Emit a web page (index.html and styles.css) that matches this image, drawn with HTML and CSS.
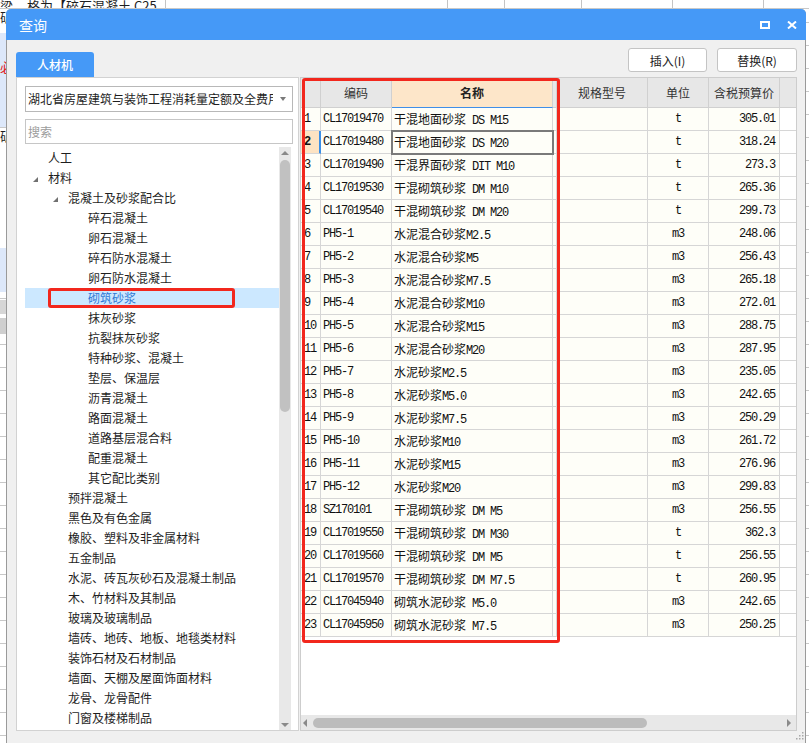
FILE: index.html
```html
<!DOCTYPE html>
<html lang="zh-CN">
<head>
<meta charset="utf-8">
<title>查询</title>
<link rel="stylesheet" href="styles.css">
</head>
<body>
<div class="desk">
  <div class="desk-top"><span class="dt1">梁</span><span class="dt2">格为【碎石混凝土 C25</span></div>
  <div class="desk-left">
    <div class="dl dl-w">斫</div>
    <div class="dl dl-b"><span class="dl-red">必</span></div>
    <div class="dl dl-w2">斫</div>
    <div class="dl dl-b2"></div>
    <div class="dl dl-g"></div>
    <div class="dl dl-g2"></div>
  </div>
</div>

<div class="dlg">
  <div class="titlebar">
    <span class="title">查询</span>
    <span class="tb-icons">
      <svg class="ic-max" width="10" height="8" viewBox="0 0 10 8"><rect x="1" y="1" width="8" height="6" fill="none" stroke="#fff" stroke-width="2"/></svg>
      <svg class="ic-close" width="10" height="8" viewBox="0 0 10 8"><path d="M1 0.5 L9 7.5 M9 0.5 L1 7.5" stroke="#fff" stroke-width="2" fill="none"/></svg>
    </span>
  </div>
  <div class="dlg-body">
    <div class="toprow">
      <div class="tab">人材机</div>
      <div class="btns">
        <button class="btn b1">插入(I)</button>
        <button class="btn b2">替换(R)</button>
      </div>
    </div>
    <div class="main">
      <div class="leftp">
        <div class="combo"><span class="combo-text">湖北省房屋建筑与装饰工程消耗量定额及全费用基价表(2018)</span><span class="combo-arrow"></span></div>
        <div class="search">搜索</div>
        <div class="tree">
          <div class="tree-list">
            <div class="ti l0">人工</div>
            <div class="ti l0"><span class="tw"></span>材料</div>
            <div class="ti l1"><span class="tw"></span>混凝土及砂浆配合比</div>
            <div class="ti l2">碎石混凝土</div>
            <div class="ti l2">卵石混凝土</div>
            <div class="ti l2">碎石防水混凝土</div>
            <div class="ti l2">卵石防水混凝土</div>
            <div class="ti l2 sel">砌筑砂浆<span class="mark"></span></div>
            <div class="ti l2">抹灰砂浆</div>
            <div class="ti l2">抗裂抹灰砂浆</div>
            <div class="ti l2">特种砂浆、混凝土</div>
            <div class="ti l2">垫层、保温层</div>
            <div class="ti l2">沥青混凝土</div>
            <div class="ti l2">路面混凝土</div>
            <div class="ti l2">道路基层混合料</div>
            <div class="ti l2">配重混凝土</div>
            <div class="ti l2">其它配比类别</div>
            <div class="ti l1">预拌混凝土</div>
            <div class="ti l1">黑色及有色金属</div>
            <div class="ti l1">橡胶、塑料及非金属材料</div>
            <div class="ti l1">五金制品</div>
            <div class="ti l1">水泥、砖瓦灰砂石及混凝土制品</div>
            <div class="ti l1">木、竹材料及其制品</div>
            <div class="ti l1">玻璃及玻璃制品</div>
            <div class="ti l1">墙砖、地砖、地板、地毯类材料</div>
            <div class="ti l1">装饰石材及石材制品</div>
            <div class="ti l1">墙面、天棚及屋面饰面材料</div>
            <div class="ti l1">龙骨、龙骨配件</div>
            <div class="ti l1">门窗及楼梯制品</div>
          </div>
          <div class="vscroll">
            <span class="arr-up"></span>
            <span class="vthumb"></span>
            <span class="arr-down"></span>
          </div>
        </div>
      </div>

      <div class="grid">
        <div class="hdr">
          <div></div><div>编码</div><div class="hname">名称</div><div></div><div>规格型号</div><div>单位</div><div>含税预算价</div><div class="x"></div>
        </div>
        <div class="rows">
          <div class="row"><div class="n">1</div><div class="c">CL17019470</div><div class="nm">干混地面砂浆<span class="m"> DS M15</span></div><div class="sp"></div><div></div><div class="u">t</div><div class="p">305.01</div><div class="x"></div></div>
          <div class="row"><div class="n cur">2</div><div class="c">CL17019480</div><div class="nm sel">干混地面砂浆<span class="m"> DS M20</span></div><div class="sp"></div><div></div><div class="u">t</div><div class="p">318.24</div><div class="x"></div></div>
          <div class="row"><div class="n">3</div><div class="c">CL17019490</div><div class="nm">干混界面砂浆<span class="m"> DIT M10</span></div><div class="sp"></div><div></div><div class="u">t</div><div class="p">273.3</div><div class="x"></div></div>
          <div class="row"><div class="n">4</div><div class="c">CL17019530</div><div class="nm">干混砌筑砂浆<span class="m"> DM M10</span></div><div class="sp"></div><div></div><div class="u">t</div><div class="p">265.36</div><div class="x"></div></div>
          <div class="row"><div class="n">5</div><div class="c">CL17019540</div><div class="nm">干混砌筑砂浆<span class="m"> DM M20</span></div><div class="sp"></div><div></div><div class="u">t</div><div class="p">299.73</div><div class="x"></div></div>
          <div class="row"><div class="n">6</div><div class="c">PH5-1</div><div class="nm">水泥混合砂浆<span class="m">M2.5</span></div><div class="sp"></div><div></div><div class="u">m3</div><div class="p">248.06</div><div class="x"></div></div>
          <div class="row"><div class="n">7</div><div class="c">PH5-2</div><div class="nm">水泥混合砂浆<span class="m">M5</span></div><div class="sp"></div><div></div><div class="u">m3</div><div class="p">256.43</div><div class="x"></div></div>
          <div class="row"><div class="n">8</div><div class="c">PH5-3</div><div class="nm">水泥混合砂浆<span class="m">M7.5</span></div><div class="sp"></div><div></div><div class="u">m3</div><div class="p">265.18</div><div class="x"></div></div>
          <div class="row"><div class="n">9</div><div class="c">PH5-4</div><div class="nm">水泥混合砂浆<span class="m">M10</span></div><div class="sp"></div><div></div><div class="u">m3</div><div class="p">272.01</div><div class="x"></div></div>
          <div class="row"><div class="n">10</div><div class="c">PH5-5</div><div class="nm">水泥混合砂浆<span class="m">M15</span></div><div class="sp"></div><div></div><div class="u">m3</div><div class="p">288.75</div><div class="x"></div></div>
          <div class="row"><div class="n">11</div><div class="c">PH5-6</div><div class="nm">水泥混合砂浆<span class="m">M20</span></div><div class="sp"></div><div></div><div class="u">m3</div><div class="p">287.95</div><div class="x"></div></div>
          <div class="row"><div class="n">12</div><div class="c">PH5-7</div><div class="nm">水泥砂浆<span class="m">M2.5</span></div><div class="sp"></div><div></div><div class="u">m3</div><div class="p">235.05</div><div class="x"></div></div>
          <div class="row"><div class="n">13</div><div class="c">PH5-8</div><div class="nm">水泥砂浆<span class="m">M5.0</span></div><div class="sp"></div><div></div><div class="u">m3</div><div class="p">242.65</div><div class="x"></div></div>
          <div class="row"><div class="n">14</div><div class="c">PH5-9</div><div class="nm">水泥砂浆<span class="m">M7.5</span></div><div class="sp"></div><div></div><div class="u">m3</div><div class="p">250.29</div><div class="x"></div></div>
          <div class="row"><div class="n">15</div><div class="c">PH5-10</div><div class="nm">水泥砂浆<span class="m">M10</span></div><div class="sp"></div><div></div><div class="u">m3</div><div class="p">261.72</div><div class="x"></div></div>
          <div class="row"><div class="n">16</div><div class="c">PH5-11</div><div class="nm">水泥砂浆<span class="m">M15</span></div><div class="sp"></div><div></div><div class="u">m3</div><div class="p">276.96</div><div class="x"></div></div>
          <div class="row"><div class="n">17</div><div class="c">PH5-12</div><div class="nm">水泥砂浆<span class="m">M20</span></div><div class="sp"></div><div></div><div class="u">m3</div><div class="p">299.83</div><div class="x"></div></div>
          <div class="row"><div class="n">18</div><div class="c">SZ170101</div><div class="nm">干混砌筑砂浆<span class="m"> DM M5</span></div><div class="sp"></div><div></div><div class="u">m3</div><div class="p">256.55</div><div class="x"></div></div>
          <div class="row"><div class="n">19</div><div class="c">CL17019550</div><div class="nm">干混砌筑砂浆<span class="m"> DM M30</span></div><div class="sp"></div><div></div><div class="u">t</div><div class="p">362.3</div><div class="x"></div></div>
          <div class="row"><div class="n">20</div><div class="c">CL17019560</div><div class="nm">干混砌筑砂浆<span class="m"> DM M5</span></div><div class="sp"></div><div></div><div class="u">t</div><div class="p">256.55</div><div class="x"></div></div>
          <div class="row"><div class="n">21</div><div class="c">CL17019570</div><div class="nm">干混砌筑砂浆<span class="m"> DM M7.5</span></div><div class="sp"></div><div></div><div class="u">t</div><div class="p">260.95</div><div class="x"></div></div>
          <div class="row"><div class="n">22</div><div class="c">CL17045940</div><div class="nm">砌筑水泥砂浆<span class="m"> M5.0</span></div><div class="sp"></div><div></div><div class="u">m3</div><div class="p">242.65</div><div class="x"></div></div>
          <div class="row"><div class="n">23</div><div class="c">CL17045950</div><div class="nm">砌筑水泥砂浆<span class="m"> M7.5</span></div><div class="sp"></div><div></div><div class="u">m3</div><div class="p">250.25</div><div class="x"></div></div>
        </div>
        <div class="hs">
          <span class="arr-left"></span>
          <span class="hthumb"></span>
          <span class="arr-right"></span>
        </div>
        <div class="redbox"></div>
      </div>
    </div>
    <div class="foot">
      <svg width="8" height="8" viewBox="0 0 8 8"><g fill="#a8a8a8"><rect x="6" y="0" width="1.5" height="1.5"/><rect x="3" y="3" width="1.5" height="1.5"/><rect x="6" y="3" width="1.5" height="1.5"/><rect x="0" y="6" width="1.5" height="1.5"/><rect x="3" y="6" width="1.5" height="1.5"/><rect x="6" y="6" width="1.5" height="1.5"/></g></svg>
    </div>
  </div>
</div>
</body>
</html>
```

FILE: styles.css
```css
* { box-sizing: border-box; }
html, body { margin: 0; padding: 0; }
body {
  width: 809px;
  height: 743px;
  overflow: hidden;
  position: relative;
  background: #fff;
  font-family: "Noto Sans CJK SC", "Noto Sans", sans-serif;
  font-size: 12px;
  color: #1e1e1e;
}

/* backdrop application */
.desk {
  height: 743px;
  background: repeating-linear-gradient(to bottom, #fff 0, #fff 22px, #c8c8c8 22px, #c8c8c8 23px);
}
.desk-top {
  height: 9px;
  overflow: hidden;
  background: #fff;
  border-bottom: 1px solid #c8c8c8;
  background-image:
    linear-gradient(#c4c4c4, #c4c4c4), linear-gradient(#c4c4c4, #c4c4c4),
    linear-gradient(#c4c4c4, #c4c4c4), linear-gradient(#c4c4c4, #c4c4c4),
    linear-gradient(#c4c4c4, #c4c4c4), linear-gradient(#c4c4c4, #c4c4c4);
  background-size: 1px 100%;
  background-repeat: no-repeat;
  background-position: 165px 0, 447px 0, 504px 0, 581px 0, 672px 0, 763px 0;
  font-size: 13px;
  line-height: 12px;
  white-space: nowrap;
}
.dt1 { display: inline-block; width: 27px; }
.desk-left { width: 6px; overflow: hidden; display: flex; flex-direction: column; font-size: 13px; line-height: 16px; }
.dl { overflow: hidden; }
.dl-w { height: 24px; background: #fff; }
.dl-b { height: 94px; background: #dde8fa; padding-top: 26px; }
.dl-red { color: #e02020; }
.dl-w2 { height: 121px; background: #fff; border-top: 1px solid #c8c8c8; }
.dl-b2 { height: 44px; background: #dde8fa; }
.dl-g { height: 14px; margin-top: 8px; background: #d6d6d6; }
.dl-g2 { height: 16px; margin-top: 4px; background: #cfcfcf; }

/* dialog window */
.dlg {
  position: absolute;
  left: 6px;
  top: 9px;
  width: 800px;
  height: 740px;
  border: 1px solid #9a9a9a;
  border-top: none;
  border-radius: 5px 5px 0 0;
  background: #f0f0f0;
  display: flex;
  flex-direction: column;
}
.titlebar {
  height: 31px;
  margin: 0 -1px;
  background: #4599f7;
  border-radius: 5px 5px 0 0;
  display: flex;
  align-items: center;
  justify-content: space-between;
  padding: 0 9px 0 13px;
}
.title { color: #fff; font-size: 14px; line-height: 16px; }
.tb-icons { display: flex; align-items: center; gap: 17px; padding-top: 1px; }
.tb-icons svg { display: block; }

.dlg-body {
  flex: 1;
  display: flex;
  flex-direction: column;
  padding: 0 8px 0 9px;
}
.toprow { height: 37px; display: flex; justify-content: space-between; }
.tab {
  align-self: flex-end;
  width: 78px;
  height: 25px;
  background: #4599f7;
  color: #fff;
  border-radius: 3px 3px 0 0;
  display: flex;
  align-items: center;
  justify-content: center;
  font-size: 12px;
  font-weight: 500;
}
.btns { display: flex; gap: 10px; margin-top: 8px; height: 24px; }
.btn {
  width: 79px;
  height: 24px;
  padding: 0;
  background: #fff;
  border: 1px solid #c4c4c4;
  border-radius: 3px;
  font-family: "Noto Sans CJK SC", sans-serif;
  font-size: 12px;
  color: #222;
}
.b2 { width: 80px; }

.main { height: 654px; display: flex; gap: 1px; }

/* left panel */
.leftp {
  width: 283px;
  border: 1px solid #d2d2d2;
  background: #fff;
  padding: 8px 5px 0 8px;
  display: flex;
  flex-direction: column;
}
.combo {
  height: 26px;
  border: 1px solid #b8b8b8;
  display: flex;
  align-items: center;
  padding-left: 2px;
}
.combo-text { flex: 1; white-space: nowrap; overflow: hidden; font-size: 12px; line-height: 16px; }
.combo-arrow {
  width: 19px;
  display: flex;
  justify-content: center;
}
.combo-arrow::after {
  content: "";
  border-left: 3.5px solid transparent;
  border-right: 3.5px solid transparent;
  border-top: 4px solid #7a7a7a;
}
.search {
  height: 25px;
  margin-top: 7px;
  border: 1px solid #c6c6c6;
  color: #9c9c9c;
  font-size: 12px;
  line-height: 23px;
  padding-left: 2px;
}
.tree { flex: 1; min-height: 0; margin-top: 3px; display: flex; padding-right: 2px; }
.tree-list { flex: 1; padding-top: 1px; overflow: hidden; }
.ti {
  height: 20px;
  line-height: 20px;
  white-space: nowrap;
  position: relative;
  display: flex;
  align-items: center;
  font-size: 12px;
}
.l0 { padding-left: 23px; }
.l1 { padding-left: 43px; }
.l2 { padding-left: 63px; }
.tw {
  width: 0;
  height: 0;
  border-left: 5px solid transparent;
  border-bottom: 5px solid #707070;
  margin-left: -15px;
  margin-right: 10px;
  margin-top: 2px;
}
.ti.sel { background: #cce8ff; color: #2f78d6; }
.mark {
  position: absolute;
  left: 23px;
  top: 0;
  width: 187px;
  height: 20px;
  border: 3px solid #f2271d;
  border-radius: 3px;
}
.vscroll {
  width: 12px;
  background: #e8e8e8;
  display: flex;
  flex-direction: column;
  align-items: center;
}
.arr-up {
  margin-top: 4px;
  border-left: 4px solid transparent;
  border-right: 4px solid transparent;
  border-bottom: 4px solid #8a8a8a;
}
.vthumb {
  margin-top: 5px;
  width: 10px;
  height: 252px;
  border-radius: 5px;
  background: #c1c1c1;
}
.arr-down {
  margin-top: auto;
  margin-bottom: 3px;
  border-left: 4px solid transparent;
  border-right: 4px solid transparent;
  border-top: 4px solid #8a8a8a;
}

/* grid */
.grid {
  flex: 1;
  border: 1px solid #cdcdcd;
  background: #fff;
  display: flex;
  flex-direction: column;
  position: relative;
}
.hdr, .row {
  display: grid;
  grid-template-columns: 20px 71px 161px 4px 91px 61px 71px 1fr;
}
.hdr > div {
  height: 30px;
  border-right: 1px solid #d0d0d0;
  border-bottom: 1px solid #d0d0d0;
  background: #e7e7e7;
  display: flex;
  align-items: center;
  justify-content: center;
  font-size: 12px;
  color: #333;
}
.hdr > .hname { background: #fde6c9; font-weight: 700; border-bottom: 1px solid #3f8fe8; color: #222; }
.hdr > .x, .row > .x { border-right: none; }
.rows { flex: 1; overflow: hidden; }
.row > div {
  height: 23px;
  line-height: 22px;
  border-right: 1px solid #d6d6d6;
  border-bottom: 1px solid #d6d6d6;
  background: #fefef8;
  white-space: nowrap;
  overflow: hidden;
  font-size: 12px;
  color: #111;
}
.row > .x { background: #fff; }
.n, .c, .u, .p, .m {
  font-family: "Liberation Mono", "DejaVu Sans Mono", monospace;
  letter-spacing: -1.2px;
}
.row > .n, .row > .c, .row > .u, .row > .p { font-size: 12px; }
.m { font-size: 12px; }
.row > .n { padding-left: 3px; }
.n.cur { background: #fde3c3; font-weight: 700; border-right: 2px solid #3a8ee6; }
.c { padding-left: 2px; }
.nm { padding-left: 2px; }
.row > .nm.sel { overflow: visible; outline: 2px solid #7a7a7a; outline-offset: -1px; position: relative; z-index: 1; }
.u { text-align: center; }
.p { text-align: right; padding-right: 4px; }

.hs {
  height: 15px;
  background: #e8e8e8;
  display: flex;
  align-items: center;
}
.arr-left {
  margin-left: 2px;
  border-top: 4px solid transparent;
  border-bottom: 4px solid transparent;
  border-right: 4px solid #8a8a8a;
}
.hthumb {
  margin-left: 6px;
  width: 334px;
  height: 10px;
  border-radius: 5px;
  background: #bcbcbc;
}
.arr-right {
  margin-left: auto;
  margin-right: 5px;
  border-top: 4px solid transparent;
  border-bottom: 4px solid transparent;
  border-left: 4px solid #8a8a8a;
}
.redbox {
  position: absolute;
  left: 1px;
  top: 0;
  width: 258px;
  height: 565px;
  border: 3px solid #f2271d;
  border-radius: 3px;
  pointer-events: none;
}
.foot {
  display: flex;
  justify-content: flex-end;
  margin-right: -7px;
  padding-top: 1px;
}
.foot svg { display: block; }
```
